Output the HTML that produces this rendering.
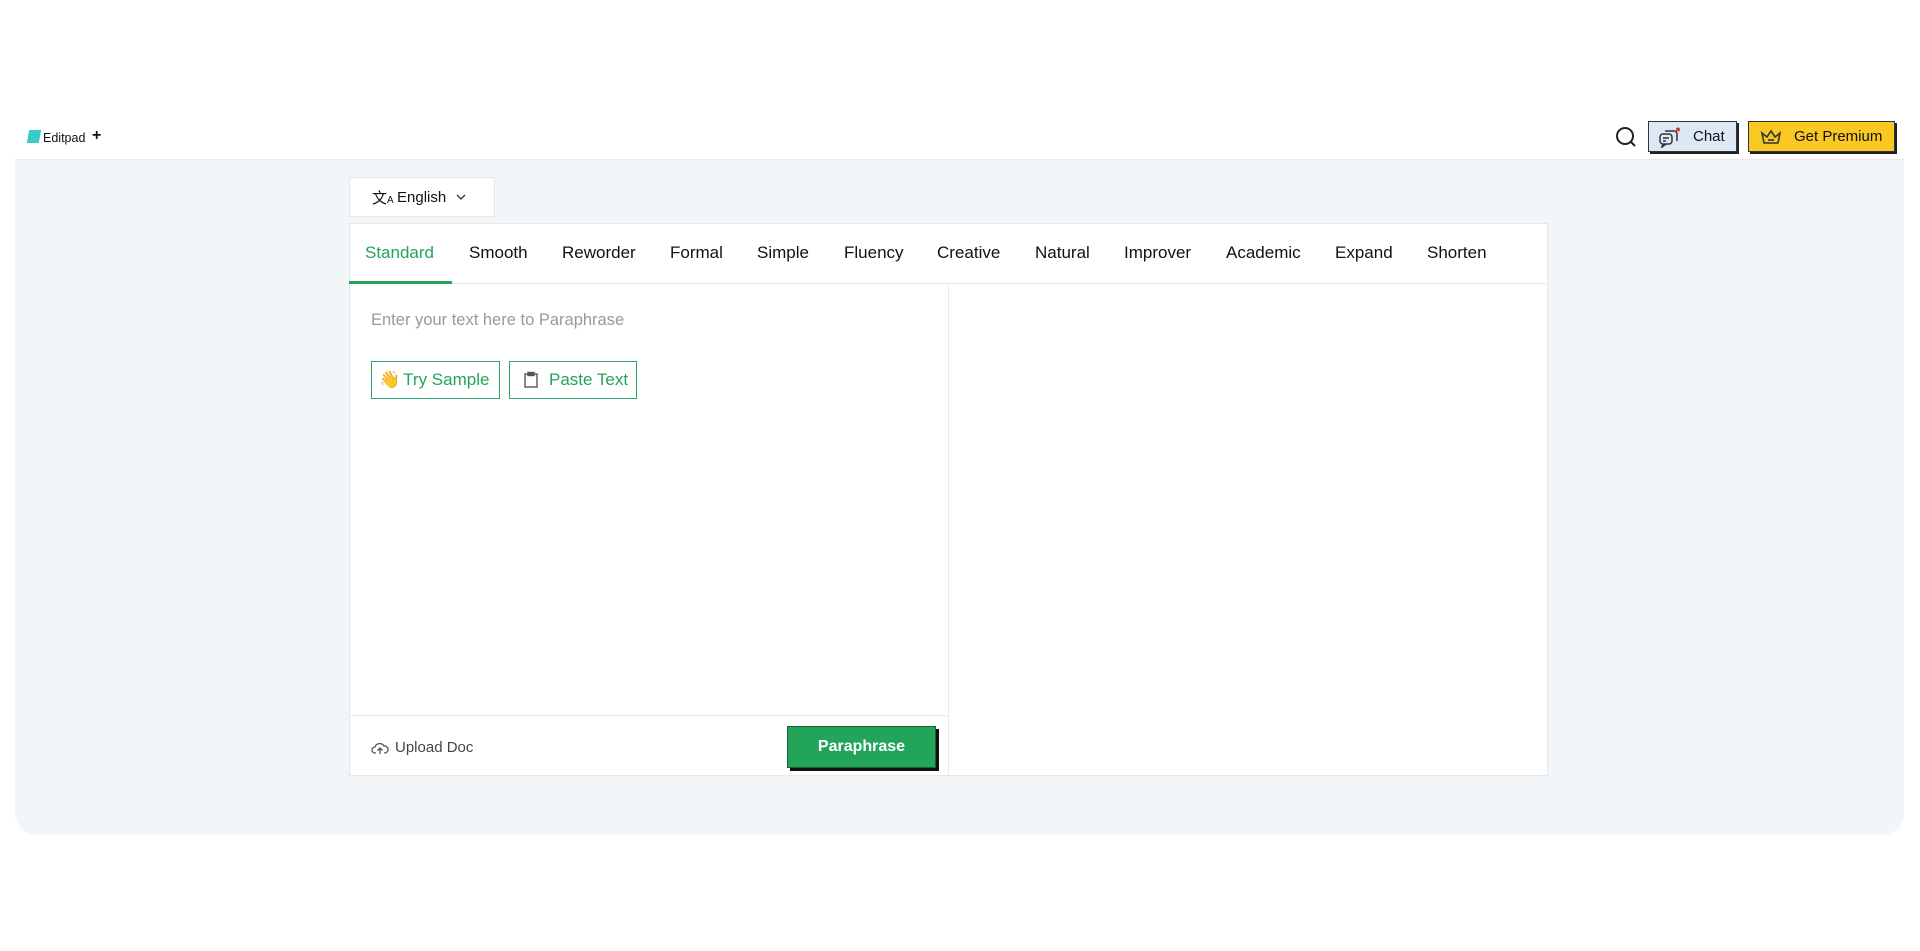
<!DOCTYPE html>
<html><head><meta charset="utf-8"><style>
*{box-sizing:border-box;margin:0;padding:0}
body{width:1920px;height:951px;background:#fff;font-family:"Liberation Sans",Arial,sans-serif;position:relative;overflow:hidden;color:#111}
.a{position:absolute}
.panel{left:15px;top:159px;width:1889px;height:676px;background:#f3f6f8;border-radius:0 0 22px 22px;border-top:1px solid #e8ecef}
.tab{top:243px;font-size:17px;color:#111}
.btn{border:1.5px solid #2aa865;color:#22a55a;font-size:17px;display:flex;align-items:center;height:38px;top:361px;padding-left:7px}
</style></head><body>
<div class="a" style="left:28px;top:130px;width:12px;height:13px;background:#3cc9c9;transform:skewX(-10deg)"></div>
<div class="a" style="left:43px;top:131px;font-size:12.5px">Editpad</div>
<div class="a" style="left:92px;top:127px;font-size:16px;font-weight:bold">+</div>
<svg class="a" style="left:1614px;top:125px" width="24" height="24" viewBox="0 0 24 24" fill="none" stroke="#222" stroke-width="2"><circle cx="11" cy="11" r="8"/><path d="M17 17l4 4"/></svg>
<div class="a" style="left:1648px;top:121px;width:89px;height:31px;background:#dce9f5;border:1.5px solid #333;box-shadow:2px 2px 0 #222"></div>
<svg class="a" style="left:1658px;top:126px" width="24" height="22" viewBox="0 0 24 22" fill="none" stroke="#333" stroke-width="1.5"><rect x="2" y="8" width="12" height="10" rx="3"/><path d="M5 12h6M5 15h3M5 18l-1 3 4-3M7 5h9a3 3 0 013 3v7"/><circle cx="20" cy="3.5" r="2" fill="#d33" stroke="none"/></svg>
<div class="a" style="left:1693px;top:128px;font-size:15px">Chat</div>
<div class="a" style="left:1748px;top:121px;width:147px;height:31px;background:#f9c823;border:1.5px solid #333;box-shadow:2px 2px 0 #222"></div>
<svg class="a" style="left:1759px;top:127px" width="24" height="20" viewBox="0 0 24 20" fill="none" stroke="#333" stroke-width="1.6"><path d="M3 6l5 4 4-6 4 6 5-4-2 10H5z"/><path d="M9 13h6"/></svg>
<div class="a" style="left:1794px;top:128px;font-size:15px">Get Premium</div>
<div class="a panel"></div>
<div class="a" style="left:349px;top:177px;width:146px;height:40px;background:#fff;border:1px solid #e4e7ea"></div>
<div class="a" style="left:372px;top:187px;font-size:15px">文<span style="font-size:10px">A</span></div>
<div class="a" style="left:397px;top:189px;font-size:15px">English</div>
<svg class="a" style="left:456px;top:193px" width="10" height="8" viewBox="0 0 10 8" fill="none" stroke="#333" stroke-width="1.3"><path d="M1 2l4 4 4-4"/></svg>
<div class="a" style="left:349px;top:223px;width:1199px;height:553px;background:#fff;border:1px solid #e4e7ea"></div>
<div class="a" style="left:349px;top:283px;width:1199px;height:1px;background:#e8eaec"></div>
<div class="a" style="left:349px;top:281px;width:103px;height:3px;background:#22a55a"></div>
<div class="a" style="left:948px;top:283px;width:1px;height:493px;background:#e8eaec"></div>
<div class="a" style="left:349px;top:715px;width:599px;height:1px;background:#e8eaec"></div>
<div class="a tab" style="left:365px;color:#22a55a">Standard</div>
<div class="a tab" style="left:469px">Smooth</div>
<div class="a tab" style="left:562px">Reworder</div>
<div class="a tab" style="left:670px">Formal</div>
<div class="a tab" style="left:757px">Simple</div>
<div class="a tab" style="left:844px">Fluency</div>
<div class="a tab" style="left:937px">Creative</div>
<div class="a tab" style="left:1035px">Natural</div>
<div class="a tab" style="left:1124px">Improver</div>
<div class="a tab" style="left:1226px">Academic</div>
<div class="a tab" style="left:1335px">Expand</div>
<div class="a tab" style="left:1427px">Shorten</div>
<div class="a" style="left:371px;top:311px;font-size:16.5px;color:#999">Enter your text here to Paraphrase</div>
<div class="a btn" style="left:371px;width:129px">👋<span style="margin-left:3px">Try Sample</span></div>
<div class="a btn" style="left:509px;width:128px;padding-left:12px"><svg width="18" height="18" viewBox="0 0 18 18" fill="none" stroke="#555" stroke-width="1.4"><rect x="3" y="3" width="12" height="13"/><rect x="6" y="1.5" width="6" height="3" fill="#555"/></svg><span style="margin-left:9px">Paste Text</span></div>
<svg class="a" style="left:371px;top:740px" width="18" height="16" viewBox="0 0 18 16" fill="none" stroke="#555" stroke-width="1.3"><path d="M5 13H4a3 3 0 010-6 5 5 0 019-1 3.5 3.5 0 011 7h-1M9 14V8M6.5 10.5L9 8l2.5 2.5"/></svg>
<div class="a" style="left:395px;top:739px;font-size:15px;color:#444">Upload Doc</div>
<div class="a" style="left:787px;top:726px;width:149px;height:42px;background:#22a55a;border:1px solid #1b5c36;box-shadow:3px 3px 0 #111;color:#fff;font-weight:bold;font-size:16px;display:flex;align-items:center;justify-content:center">Paraphrase</div>
</body></html>
